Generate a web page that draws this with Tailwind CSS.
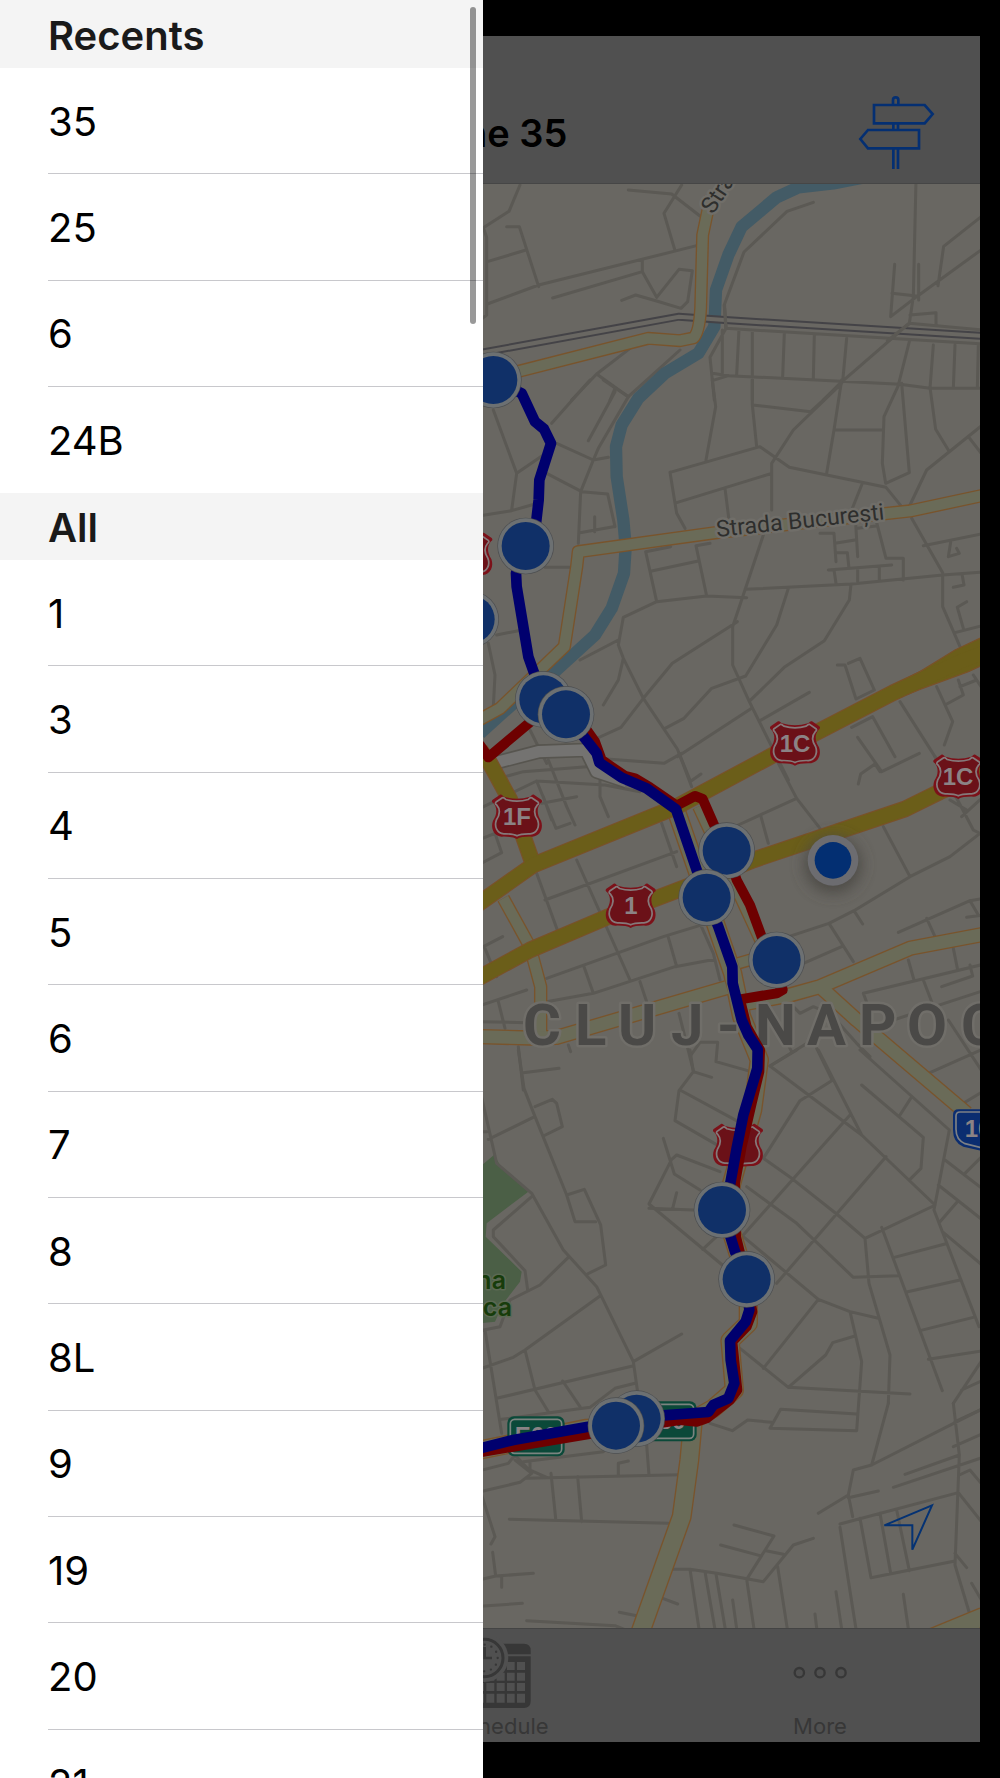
<!DOCTYPE html>
<html lang="en">
<head>
<meta charset="utf-8">
<meta name="viewport" content="width=device-width, initial-scale=1">
<title>Line 35</title>
<script src="https://cdn.jsdelivr.net/npm/@tailwindcss/browser@4"></script>
</head>
<body class="bg-black font-['Inter',sans-serif] text-black">
<div class="relative flex h-screen flex-col overflow-hidden px-5 py-9">

  <main class="flex min-h-0 flex-1 flex-col bg-[#505050]">
    <header class="grid h-[148px] shrink-0 grid-cols-3 items-center border-b border-[#464646] pt-[46px]">
      <h1 class="col-start-2 text-center text-[38px] leading-[48px] font-semibold">Line 35</h1>
      <button type="button" aria-label="Directions" class="mr-[44px] justify-self-end">
        <svg class="h-[76px] w-[78px]" viewBox="1134 281 234 228" fill="none" stroke="#042f72" stroke-width="8">
          <path d="M1239 310V296a8 8 0 0 1 16 0v14M1182 311H1334L1358 338 1334 366H1182ZM1240 368V384M1254 368V384M1317 386H1164L1141 413 1164 441H1317ZM1240 443V503M1254 443V503"/>
        </svg>
      </button>
    </header>

    <section aria-label="Map" class="relative min-h-0 flex-1 overflow-hidden bg-[#696762]">
      <svg class="block h-full w-full" viewBox="20 184 960 1444" preserveAspectRatio="xMidYMid slice" fill="none">
        <defs>
          <path id="shieldShape" d="M-51-66C-46-68-44-64-39-60Q-20-54 0-54Q20-54 39-60C44-64 46-68 51-66L73-51C77-47 75-43 71-41C58-26 60-6 72 12C80 34 70 58 46 60Q14 59 0 67Q-14 59-46 60C-70 58-80 34-72 12C-60-6-58-26-71-41C-75-43-77-47-73-51Z"/>
          <g id="shield" stroke-linejoin="round">
            <use href="#shieldShape" fill="#7c1119"/>
            <use href="#shieldShape" transform="scale(.86)" fill="#6b1118" stroke="#85797a" stroke-width="6"/>
          </g>
          <g id="stop">
            <circle r="85" fill="#4c4e50"/>
            <circle r="83" fill="#6c7072"/>
            <circle r="72" fill="#103068"/>
          </g>
          <filter id="soft" x="-50%" y="-50%" width="200%" height="200%"><feGaussianBlur stdDeviation="22"/></filter>
          <path id="sec1" d="M692 590L668 705 662 925C660 960 655 1000 640 1014L600 1022 505 1015 100 1118"/>
          <path id="sec2" d="M1510 1486L1290 1533 1195 1543 715 1597 295 1655 290 1700 253 1940 180 2010 60 2125 0 2158"/>
          <path id="sec3" d="M70 2695L150 2840 182 2960V3105"/>
          <path id="sec4" d="M0 3110L150 3114 230 3112 740 2963M800 3010L930 2985 1020 2960 1290 2845 1510 2803M1020 2960L1130 3060 1460 3340"/>
          <path id="sec5" d="M655 2420L850 2840M775 2890L860 2865"/>
          <path id="sec6" d="M588 2430L675 2680 758 2920 785 3050 838 3180 818 3330 755 3550 740 3650 805 3860 805 3970 750 4022 763 4170 700 4225 620 4270 320 4285 0 4350"/>
          <path id="sec7" d="M638 4270L628 4380 605 4550 480 4900M1360 4912L1510 4850"/>
          <path id="pri1" d="M-10 2715L160 2595 590 2420 900 2254 1240 2078 1440 1985 1520 1955"/>
          <path id="pri2" d="M-10 2937L150 2850 380 2752 620 2660 820 2580 1275 2427 1380 2375 1510 2320"/>
          <path id="pri3" d="M0 2250L30 2290 90 2400 130 2510 160 2595"/>
        </defs>

        <g transform="translate(480 0) scale(.33333)">
          <path fill="#4b5f46" d="M0 3500L42 3465 60 3495 145 3575 20 3670 17 3710 125 3815 120 3845 70 3910 45 3965 0 3970Z"/>
        </g>

        <!-- local streets, north to south -->
        <g stroke="#5b5954" stroke-width="9" stroke-linecap="round" stroke-linejoin="round">
          <path transform="translate(480 0) scale(.33333)" d="M0 685L10 683 87 634 120 555M10 683L20 712V945L0 960M22 785L138 750M80 680H118L176 860M22 912L176 855 650 737M218 894L487 815M487 780V815L530 892 597 808 637 812 623 905 603 925 530 903 467 885 425 901M445 570L575 582 660 648M605 555L552 640 584 748M1000 607L921 634 792 756 733 914 738 985 690 1072 703 1200M1308 540L1300 890M1244 793L1232 950 1310 890 1510 745M1316 793V900M1236 880L1310 888M1374 857L1391 739 1510 645M1300 890L1288 970 1080 1150 1030 1200M1290 945L1368 938V975M738 985L1510 1032M1288 970L1510 990M727 990V1120M777 988L770 1125M817 990V1200M913 1000L908 1130M1003 1005L1000 1135M1100 1015L1088 1145M1288 1025L1255 1155M1360 1035L1350 1165M1425 1035L1420 1165M1495 1035L1492 1165M697 1120L745 1127 1260 1153 1350 1165H1510M697 1142L745 1127M275 1200L350 1122 450 1045M350 1122L445 1190 600 1050M390 1200L405 1165"/>
          <path transform="translate(480 380) scale(.33333)" d="M40 90L110 280 95 390M110 280L190 225M0 407L95 392 165 372M330 0L215 130M370 0L445 50 355 205 340 240 302 335 295 490M405 35L325 182M230 190L340 240 385 232M200 280L305 335 383 342 405 440M300 458L400 440M344 410V455M195 562H270M697 0L707 80 678 240M817 0V75L992 95 1085 10M817 75L830 200M570 277L840 200 928 262 1218 322 1265 380M570 277L590 400 615 445M590 368L875 280M875 390V250L940 150 1085 10M735 325L747 420M1085 0L1062 150 1040 280M1062 150H1208M1258 10L1212 110 1207 250 1217 310 1288 278 1265 10M1350 22L1367 148 1405 210M1290 375L1340 270 1510 133M1465 170L1510 228M1145 315L1115 390M850 465L758 740V855L808 965 925 1200M497 515L530 665M497 515L572 500M515 573L655 543M690 490L648 497 680 648M415 795L430 712 530 665 680 648 800 653M795 628L1115 612 1388 585 1510 576M925 625L890 735 797 888 695 925 612 1015 555 1045M1113 612L1108 660 1033 782 915 860 810 962M772 725L577 850 490 955 423 1042 340 1080M300 840L415 780M415 795L430 835 490 955 592 1107 630 1200M430 835L415 900 370 975M1020 460H1062L1068 545M1065 490L1125 480M1127 430L1133 530M1068 518H1102L1107 565M1045 570L1235 555M1062 570L1068 610M1133 565V605M1198 560V600M1188 420L1218 535H1270V600M1133 445L1188 438M1295 415L1388 578V680L1440 800M1330 497L1510 461M1412 487L1405 530 1438 520 1430 505M1447 587L1452 615 1420 622M1460 665L1432 682 1450 745M1425 758L1510 736M1072 855H1095L1128 957 1183 930 1140 835 1105 850M1260 965L1365 1130M1370 920L1418 1025 1393 1095M1395 975L1450 945 1435 900M1440 920L1490 900M1480 885L1510 930M840 1022L988 937M1115 1042L1178 1010 1245 1130M1133 1072L1205 1175 1318 1120M25 790L45 885 40 980M50 765L115 752M592 1130L815 985M380 1137L552 1150 605 1120M150 1050L200 1150"/>
          <path transform="translate(480 700) scale(.33333)" d="M1135 252L1142 222 1185 192 1200 215M1365 170L1480 390 1500 400 1410 470 1290 530 1210 380M1445 350L1510 290M1410 300L1460 330M630 245L663 222M597 160L635 260M895 190L950 295 1020 385M775 375L950 295M843 350L865 430M195 600L590 455M75 230L130 215 320 200M0 325L170 243 375 255 480 275M170 243L228 385 270 370M190 290L215 360M205 180L260 320 285 375M360 240V290L385 350M0 418L45 400 65 458 0 492M185 310L290 290M170 520L232 690M290 480L450 840M545 370L590 500M0 745L68 710M15 745L50 830M200 835L550 710 680 670M565 712L590 800M312 800L340 880 200 905M340 880L585 800 705 778M480 845L500 905M0 917L140 870M660 670L700 760 720 840M910 715L1047 670 1122 632 1290 530M1122 632L1148 672M1255 697L1470 602 1510 595M1470 602L1495 645M1460 652L1510 645M1340 655L1365 710M1047 670L1120 785M960 795L1085 740M1285 780L1302 840M1420 745L1432 805M1150 880L1510 793M1385 860L1478 828 1470 795M1330 840L1355 905M1150 880L1165 920M1240 960L1510 872M0 965L140 968M55 905L75 985M115 1040L130 1170M597 940L640 1112M633 1065L660 1027H713L708 1085 803 1112M870 1098L1030 1000M870 930L935 1055M940 920L960 940 1000 920 1050 940 1130 1030 1170 1070M265 1035L272 1055M1010 1045L1055 1137M1405 960L1510 1120M1350 1118L1510 1047"/>
          <path transform="translate(480 1050) scale(.33333)" d="M115 0L132 115 165 200 260 435 285 515H347M260 435L313 418 362 525 377 645 322 672M0 120L50 340 155 430 250 600 350 710 460 935 472 1020M165 170L217 148 230 160 247 230 190 258M25 268L158 203M130 68L237 55M0 245H20M155 440L40 540V560L135 662 143 720M265 622L180 705 90 750 60 830 0 842M360 738L135 900 100 922 0 957M15 840L65 1150M135 900L165 1020 205 1085M50 1045L458 948M248 993L300 1070M65 1108L330 1072 405 1015 465 1000M460 935L605 852M630 0L640 65 597 122 585 212 720 290M640 65L695 82M600 120L775 215M550 265L583 372 660 420M720 365L590 315 575 328 507 462 745 660M507 475L640 480M578 475L590 428M668 598L720 550M870 48L1145 255 1365 465M870 48L950 0M1015 0L1145 255M850 325L960 152 1055 92M850 325L935 385 1070 492 1155 565M790 555L870 465 1110 195M800 410L950 520 1120 682 1255 677M890 700L1218 320M790 560L1015 748 1110 785 1195 805M1145 105L1330 262 1323 355 1290 388M1260 195L1292 145M1140 0L1408 240 1362 480 1497 830M1155 565L1360 468M1155 565L1167 700 1230 915 1225 1060M1205 532L1387 1022M1243 622L1395 582M1283 725L1440 690M1320 842L1480 802M1345 928L1510 902M1395 330L1510 418M1455 370L1510 315M1375 405L1510 512M1380 515L1432 455M1387 545L1510 648M1450 160L1510 124M780 895L925 1012 1290 1032M850 955L1015 748M925 1012L1037 915 1058 878 1125 858M1110 785L1145 935 1130 1142 870 1135 902 1078 1130 1092M690 1120L757 1142 803 1110 875 1117M1510 925L1420 1060M1445 1020L1510 990M1425 1115L1510 1076"/>
          <path transform="translate(480 1380) scale(.33333)" d="M1225 70L1175 255 1120 270 1105 345 1118 410M1175 255L1510 85M1105 345L1015 400M1105 353L1195 333M1275 283L1438 225M1420 200L1510 160M1240 322L1510 232M1420 70L1438 225 1425 555 1470 705M1080 432L1435 338 1510 432M1438 285L1470 270 1510 318M1080 442L1130 760M1140 415L1173 593 1425 543M1425 520L1460 563M1200 400L1232 580M1250 390L1288 572M1475 610L1510 670M1270 643L1287 760M1068 635L1087 760M1005 702L1012 760M762 435L882 468 800 598M722 495L840 527M858 512L910 523M1000 475L940 495 850 605 710 580 630 568H575M893 560L924 760M800 598L824 760M758 660L772 760M630 568L659 760M675 575L707 760M708 582L738 760M548 655L593 672M418 697L470 707M140 722L405 737 450 755M0 679L127 670M88 418L565 430M140 295L600 284M213 280L227 415M293 290L305 425M415 285V250L445 243M500 195L507 285M0 272L85 250 105 225 145 268 200 292M0 335L120 307 155 280 105 240M150 245V268M130 245L370 215M0 330L45 470 33 492M38 517L47 588 0 599M47 588L160 580M65 590V622"/>
        </g>

        <g transform="translate(480 0) scale(.33333)" stroke-linejoin="round">
          <!-- river -->
          <path stroke="#435b66" stroke-width="37" d="M1190 525L1060 550 955 562 890 592 785 680 745 765 708 870 703 980 655 1060 555 1120 475 1195 425 1275 408 1340 410 1430 430 1560 437 1640 432 1720 395 1825 345 1905 230 2010 100 2110 0 2200"/>
          <!-- railway -->
          <path stroke="#444347" stroke-width="24" d="M0 1059L597 950 735 960 1510 1008"/>
          <path stroke="#696762" stroke-width="12" d="M0 1059L597 950 735 960 1510 1008"/>
          <path stroke="#5b5954" stroke-width="10" d="M733 914L738 985M1288 970L1220 1025"/>

          <path stroke="#57554f" stroke-width="44" d="M40 2290L175 2255 318 2250 350 2315 440 2345"/>
          <path stroke="#747371" stroke-width="34" d="M40 2290L175 2255 318 2250 350 2315 440 2345"/>

          <!-- secondary roads -->
          <g stroke="#79542c">
            <use href="#sec1" stroke-width="39"/><use href="#sec2" stroke-width="40"/><use href="#sec3" stroke-width="40"/>
            <use href="#sec4" stroke-width="46"/><use href="#sec5" stroke-width="38"/><use href="#sec6" stroke-width="58"/><use href="#sec7" stroke-width="60"/>
          </g>
          <g stroke="#6a6b58">
            <use href="#sec1" stroke-width="31"/><use href="#sec2" stroke-width="32"/><use href="#sec3" stroke-width="32"/>
            <use href="#sec4" stroke-width="38"/><use href="#sec5" stroke-width="30"/><use href="#sec6" stroke-width="50"/><use href="#sec7" stroke-width="52"/>
          </g>

          <!-- primary roads -->
          <g stroke="#795229" stroke-width="50"><use href="#pri3"/><use href="#pri2"/><use href="#pri1"/></g>
          <path fill="#6b5e19" stroke="#795229" stroke-width="4" d="M1240 2056L1320 2015 1425 1950 1520 1905V1990L1465 2015 1320 2068 1240 2100Z"/>
          <g stroke="#6b5e19" stroke-width="43"><use href="#pri3"/><use href="#pri2"/><use href="#pri1"/></g>
        </g>

        <!-- place names -->
        <g stroke="#706e69" stroke-width="5" stroke-linejoin="round" paint-order="stroke" fill="#2e2e2d">
          <text class="font-['Roboto'] text-[23px]" transform="translate(717 537) rotate(-6)">Strada București</text>
          <text class="font-['Roboto'] text-[23px]" transform="translate(713 215) rotate(-57)">Strada</text>
          <g class="font-['Inter'] text-[25px] font-semibold" fill="#173c0b" text-anchor="end" stroke="#5b6953" stroke-width="3">
            <text x="506" y="1289">Grădina</text>
            <text x="512" y="1316">Botanica</text>
          </g>
          <text class="font-['Roboto'] text-[58px] font-bold" fill="#4a4947" x="523 575 618 671 717 755 807 859 907 961" y="1045">CLUJ-NAPOC</text>
        </g>

        <!-- road numbers -->
        <g transform="translate(480 0) scale(.33333)">
          <use href="#shield" x="-38" y="1665"/>
          <use href="#shield" x="111" y="2450"/>
          <use href="#shield" x="452" y="2717"/>
          <use href="#shield" x="945" y="2230"/>
          <use href="#shield" x="1435" y="2330"/>
          <use href="#shield" x="774" y="3438"/>
          <path fill="#0b2d70" d="M1436 3328H1600V3470L1520 3456 1450 3440Q1419 3428 1419 3390V3345Q1419 3328 1436 3328Z"/>
          <path stroke="#7d8085" stroke-width="5" d="M1510 3336H1440Q1428 3336 1428 3348V3388Q1428 3420 1455 3431L1510 3445"/>
          <g fill="#0b4939">
            <rect x="82" y="4249" width="172" height="120" rx="20"/>
            <rect x="478" y="4204" width="172" height="120" rx="20"/>
            <g stroke="#7b8480" stroke-width="5"><rect x="91" y="4258" width="154" height="102" rx="13"/><rect x="487" y="4213" width="154" height="102" rx="13"/></g>
          </g>
        </g>
        <g class="font-['Liberation_Sans'] text-[24px] font-bold" fill="#8b8385" text-anchor="middle">
          <text x="517" y="825">1F</text>
          <text x="631" y="914">1</text>
          <text x="795" y="752">1C</text>
          <text x="958" y="785">1C</text>
          <text x="978" y="1137">10</text>
          <text x="536" y="1444">E60</text>
          <text x="664" y="1429">E60</text>
        </g>

        <!-- bus routes and stops -->
        <g transform="translate(480 0) scale(.33333)" stroke-linejoin="round" stroke-linecap="round">
          <g stroke="#6e0000" stroke-width="30">
            <path d="M0 2235L25 2272 170 2150M258 2143L320 2190 345 2225 365 2280 435 2328 465 2335 510 2362 590 2417 645 2388 668 2397 700 2470 740 2552 770 2640 810 2715 845 2810 890 2880 908 2970 890 2980 780 2998 800 3080 840 3150 838 3215 815 3310 785 3440 765 3550 768 3710 800 3838 817 3935 800 3980 757 4025 772 4170 750 4200 680 4255 650 4265 600 4260 400 4290 0 4357"/>
          </g>
          <path stroke="#00006e" stroke-width="32" d="M40 1140L125 1180 165 1265 192 1287 213 1330 178 1440 176 1500 168 1570 137 1638 108 1720 110 1760 145 1970 190 2098 258 2143 315 2215 350 2260 358 2288 425 2333 500 2365 588 2428 650 2610 680 2693 715 2780 757 2900 758 2950 785 3060 805 3105 833 3148 832 3205 790 3345 770 3445 750 3555 745 3690 765 3755 800 3838 808 3930 797 3965 750 4022 752 4080 763 4150 745 4195 700 4215 685 4236 550 4246 320 4281 100 4320 0 4345"/>
          <use href="#stop" x="40" y="1140"/>
          <use href="#stop" x="137" y="1638"/>
          <use href="#stop" x="-28" y="1858"/>
          <use href="#stop" x="190" y="2098"/>
          <use href="#stop" x="258" y="2143"/>
          <use href="#stop" x="740" y="2552"/>
          <use href="#stop" x="680" y="2693"/>
          <use href="#stop" x="890" y="2880"/>
          <use href="#stop" x="726" y="3630"/>
          <use href="#stop" x="800" y="3838"/>
          <use href="#stop" x="470" y="4256"/>
          <use href="#stop" x="408" y="4277"/>
          <circle cx="1059" cy="2594" r="84" fill="#4b4a45" filter="url(#soft)"/>
          <circle cx="1059" cy="2581" r="76" fill="#6c6c70"/>
          <circle cx="1059" cy="2581" r="55" fill="#032f72"/>
        </g>
      </svg>
      <button type="button" aria-label="My location" class="absolute right-[45px] bottom-[73px]">
        <svg class="block h-[53px] w-[54px]" viewBox="1203 367 162 159" fill="none" stroke="#043273" stroke-width="6">
          <path d="M1356 377L1297 510V437H1213Z"/>
        </svg>
      </button>
    </section>

    <nav class="grid h-[114px] shrink-0 grid-cols-3 border-t border-[#444] text-[22px] leading-[28px] text-[#373737]">
      <button type="button" class="col-start-2 flex flex-col items-center gap-[3px] pt-2">
        <svg class="h-[72px] w-[64px]" viewBox="-36 770 192 216">
          <path fill="#373737" d="M-32 822V810Q-32 790-12 790H132Q152 790 152 810V822ZM-32 828H152V963Q152 983 132 983H-12Q-32 983-32 963Z"/>
          <path fill="#505050" d="M111 845h24v24h-24zM81 845h23v24H81zM50 845h24v24H50zM111 877h24v24h-24zM81 877h23v24H81zM50 877h24v24H50zM19 877h24v24H19zM111 908h24v24h-24zM81 908h23v24H81zM50 908h24v24H50zM19 908h24v24H19zM-12 908h24v24h-24zM111 940h24v27h-24zM81 940h23v27H81zM50 940h24v27H50zM19 940h24v27H19zM-12 940h24v27h-24z"/>
          <circle cx="13" cy="833" r="72" fill="#505050"/>
          <circle cx="13" cy="833" r="56" fill="none" stroke="#373737" stroke-width="9"/>
          <circle cx="13" cy="833" r="40" fill="none" stroke="#373737" stroke-width="7" stroke-linecap="round" stroke-dasharray="0 20.94"/>
          <path d="M14 800V833H36" fill="none" stroke="#373737" stroke-width="8"/>
        </svg>
        <span>Schedule</span>
      </button>
      <button type="button" class="flex flex-col items-center gap-[3px] pt-2">
        <svg class="h-[72px] w-[64px]" viewBox="920 770 192 216" fill="none" stroke="#373737" stroke-width="7">
          <circle cx="954" cy="877" r="14"/><circle cx="1016" cy="877" r="14"/><circle cx="1079" cy="877" r="14"/>
        </svg>
        <span>More</span>
      </button>
    </nav>
  </main>

  <!-- line picker drawer -->
  <aside class="absolute inset-y-0 left-0 w-[483px] overflow-hidden bg-white text-[40px] leading-[48px]">
    <h2 class="flex h-[68px] items-center bg-[#f4f4f4] pt-1 pl-12 font-semibold text-[#1a1a1a]">Recents</h2>
    <ul class="grid h-[425px] auto-rows-fr pl-12">
      <li class="flex border-b border-[#c8c8cc]"><a href="#35" class="flex flex-1 items-center pt-0.5">35</a></li>
      <li class="flex border-b border-[#c8c8cc]"><a href="#25" class="flex flex-1 items-center pt-0.5">25</a></li>
      <li class="flex border-b border-[#c8c8cc]"><a href="#6" class="flex flex-1 items-center pt-0.5">6</a></li>
      <li class="flex"><a href="#24B" class="flex flex-1 items-center pt-0.5">24B</a></li>
    </ul>
    <h2 class="flex h-[67px] items-center bg-[#f4f4f4] pt-0.5 pl-12 font-semibold text-[#1a1a1a]">All</h2>
    <ul class="grid h-[1276px] auto-rows-fr pl-12">
      <li class="flex border-b border-[#c8c8cc]"><a href="#1" class="flex flex-1 items-center pt-0.5">1</a></li>
      <li class="flex border-b border-[#c8c8cc]"><a href="#3" class="flex flex-1 items-center pt-0.5">3</a></li>
      <li class="flex border-b border-[#c8c8cc]"><a href="#4" class="flex flex-1 items-center pt-0.5">4</a></li>
      <li class="flex border-b border-[#c8c8cc]"><a href="#5" class="flex flex-1 items-center pt-0.5">5</a></li>
      <li class="flex border-b border-[#c8c8cc]"><a href="#all-6" class="flex flex-1 items-center pt-0.5">6</a></li>
      <li class="flex border-b border-[#c8c8cc]"><a href="#7" class="flex flex-1 items-center pt-0.5">7</a></li>
      <li class="flex border-b border-[#c8c8cc]"><a href="#8" class="flex flex-1 items-center pt-0.5">8</a></li>
      <li class="flex border-b border-[#c8c8cc]"><a href="#8L" class="flex flex-1 items-center pt-0.5">8L</a></li>
      <li class="flex border-b border-[#c8c8cc]"><a href="#9" class="flex flex-1 items-center pt-0.5">9</a></li>
      <li class="flex border-b border-[#c8c8cc]"><a href="#19" class="flex flex-1 items-center pt-0.5">19</a></li>
      <li class="flex border-b border-[#c8c8cc]"><a href="#20" class="flex flex-1 items-center pt-0.5">20</a></li>
      <li class="flex"><a href="#21" class="flex flex-1 items-center pt-0.5">21</a></li>
    </ul>
    <div class="absolute top-[7px] right-[7px] h-[317px] w-[6px] rounded-full bg-black/40"></div>
  </aside>
</div>
</body>
</html>
